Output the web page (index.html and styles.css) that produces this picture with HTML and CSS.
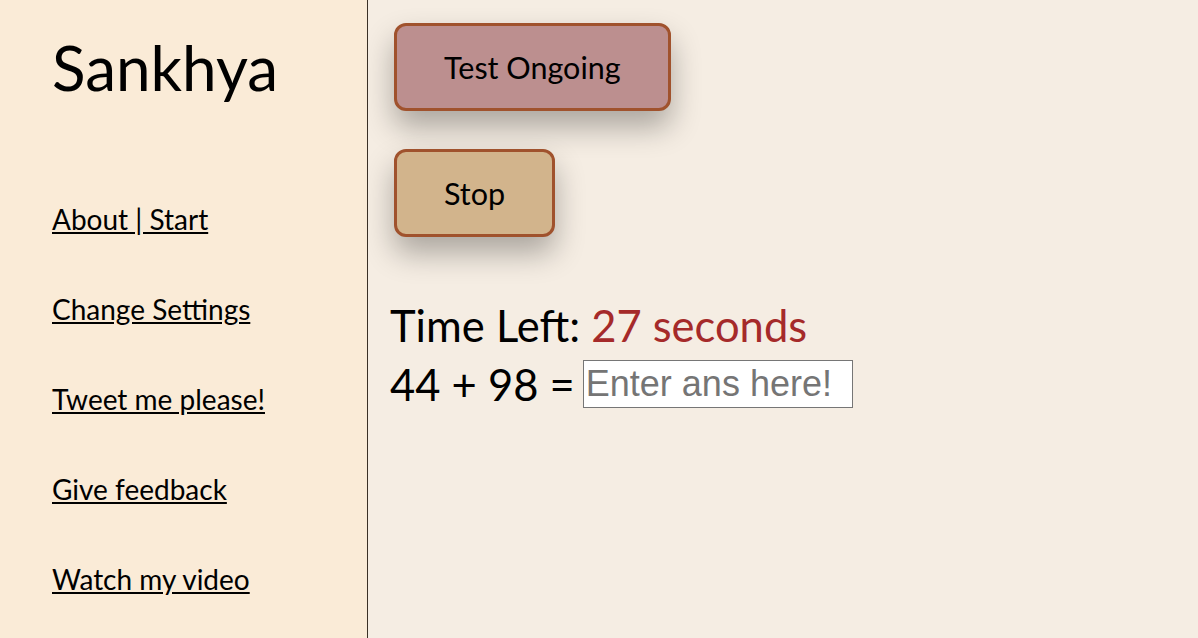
FILE: index.html
```html
<!DOCTYPE html>
<html>
<head>
<meta charset="utf-8">
<link rel="stylesheet" href="styles.css">
</head>
<body>
<div class="page">
  <aside class="sidebar">
    <h1 class="brand">Sankhya</h1>
    <nav class="nav">
      <a href="#">About | Start</a>
      <a href="#">Change Settings</a>
      <a href="#">Tweet me please!</a>
      <a href="#">Give feedback</a>
      <a href="#">Watch my video</a>
    </nav>
  </aside>
  <main class="main">
    <button class="btn btn-status">Test Ongoing</button>
    <button class="btn btn-stop">Stop</button>
    <div class="timer">Time Left: <span class="secs">27 seconds</span></div>
    <div class="question">44 + 98 = <input class="answer" type="text" placeholder="Enter ans here!"></div>
  </main>
</div>
</body>
</html>
```
FILE: styles.css
```css
html, body {
  margin: 0;
  padding: 0;
  height: 100%;
}
body {
  font-family: Lato, "Open Sans", sans-serif;
  color: #000;
  background: #f5ede3;
}
.page {
  display: flex;
  height: 638px;
}
.sidebar {
  width: 368px;
  flex: none;
  background: #faebd7;
  border-right: 1px solid #3a3026;
  padding-left: 52px;
  box-sizing: border-box;
}
.brand {
  margin: 29px 0 0;
  font-size: 62px;
  font-weight: 400;
  line-height: 76px;
}
.nav {
  display: flex;
  flex-direction: column;
  gap: 60px;
  margin-top: 99px;
}
.nav a {
  color: #000;
  font-size: 28px;
  line-height: 30px;
  text-decoration: underline;
}
.main {
  flex: 1;
  padding: 23px 0 0 22px;
  display: flex;
  flex-direction: column;
  align-items: flex-start;
}
.btn {
  font-family: Lato, sans-serif;
  font-size: 30.5px;
  color: #000;
  border: 3px solid #a0522d;
  border-radius: 12px;
  height: 88px;
  padding: 0 47px;
  margin-left: 4px;
  box-shadow: 0 16px 30px rgba(0,0,0,0.3);
}
.btn-status {
  background: #bc8f8f;
}
.btn-stop {
  background: #d2b48c;
  margin-top: 38px;
}
.timer {
  margin-top: 60px;
  font-size: 43.5px;
  line-height: 56px;
}
.secs {
  color: #a52a2a;
}
.question {
  font-size: 43.5px;
  line-height: 52px;
  margin-top: 5px;
  display: flex;
  align-items: center;
  gap: 8px;
}
.answer {
  font-family: "Liberation Sans", Arial, sans-serif;
  font-size: 36px;
  width: 264px;
  height: 44px;
  padding: 1px 2px;
  border: 1px solid #767676;
  background: #fff;
  box-sizing: content-box;
}
.answer::placeholder {
  color: #757575;
}
```
